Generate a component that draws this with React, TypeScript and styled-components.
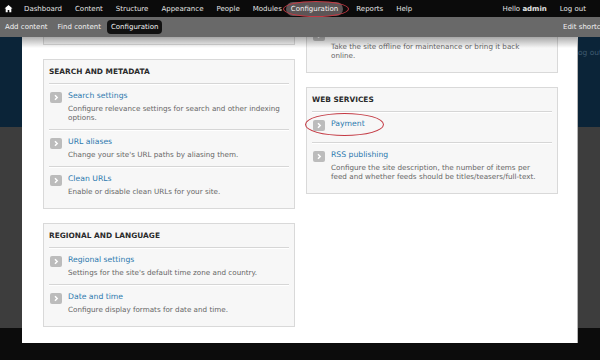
import React from 'react';
import styled, { createGlobalStyle } from 'styled-components';

const Global = createGlobalStyle`
  html, body { margin: 0; padding: 0; background: #0c0c0c; }
  body { font-family: "DejaVu Sans", Verdana, sans-serif; width: 600px; height: 360px; overflow: hidden; }
`;

const Page = styled.div`
  display: flex;
  flex-direction: column;
  width: 600px;
  height: 360px;
`;

const Toolbar = styled.div`
  height: 17px;
  flex-shrink: 0;
  background: #0b0b0b;
  display: flex;
  align-items: center;
  padding: 0 9px 0 0;
  font-size: 7px;
  color: #e4e4e4;
`;

const NavGroup = styled.div`
  display: flex;
  align-items: center;
  gap: 3px;
`;

const NavItem = styled.span<{ $active?: boolean }>`
  position: relative;
  padding: 0 5px;
  margin: ${(p) => (p.$active ? '0 5px 0 -4px' : '0')};
  line-height: 14px;
  white-space: nowrap;
  border-radius: 7px;
  background: ${(p) => (p.$active ? '#5c5556' : 'transparent')};
  color: ${(p) => (p.$active ? '#f4f0f0' : '#e4e4e4')};
  ${(p) =>
    p.$active &&
    `&::after {
      content: '';
      position: absolute;
      left: -3px; right: -6px; top: -1px; bottom: -1px;
      border: 1.5px solid #c43a44;
      border-radius: 50%;
    }`}
`;

const HomeLink = styled.span`
  display: flex;
  align-items: center;
  padding: 0 6px 0 4px;
`;

const Spacer = styled.div`
  flex: 1;
`;

const Shortcuts = styled.div`
  height: 20px;
  flex-shrink: 0;
  background: #696969;
  display: flex;
  align-items: center;
  padding-left: 1px;
  font-size: 7px;
  color: #f2f2f2;
  gap: 2px;
  overflow: hidden;
`;

const ShortcutItem = styled.span<{ $active?: boolean }>`
  padding: 0 4px;
  line-height: 14px;
  white-space: nowrap;
  border-radius: 4px;
  background: ${(p) => (p.$active ? '#111' : 'transparent')};
`;

const EditShortcuts = styled.span`
  margin-left: auto;
  width: 37px;
  flex-shrink: 0;
  overflow: hidden;
  white-space: nowrap;
`;

const Body = styled.div`
  position: relative;
  flex: 1;
  overflow: hidden;
`;

const Backdrop = styled.div`
  display: grid;
  grid-template-rows: 90px 201px 1fr;
  height: 100%;
`;

const Band = styled.div<{ $tone: string }>`
  background: ${(p) => p.$tone};
  display: flex;
  justify-content: flex-end;
  align-items: flex-start;
  overflow: hidden;
`;

const GhostText = styled.span`
  margin: 11px -2px 0 0;
  font-size: 7.5px;
  color: #3f5b70;
  white-space: nowrap;
`;

const Panel = styled.div`
  position: absolute;
  top: 0;
  left: 22px;
  width: 556px;
  height: 306px;
  background: #fff;
  border-right: 1px solid #b5b5b5;
  box-sizing: border-box;
  overflow: hidden;
  &::before {
    content: '';
    position: absolute;
    top: 0; left: 0; right: 0;
    height: 11px;
    background: linear-gradient(rgba(0, 0, 0, 0.32), rgba(0, 0, 0, 0));
    z-index: 2;
    pointer-events: none;
  }
`;

const Columns = styled.div`
  display: grid;
  grid-template-columns: 252px 252px;
  column-gap: 11px;
  padding-left: 21px;
  align-items: start;
`;

const Column = styled.div`
  display: flex;
  flex-direction: column;
  gap: 14px;
`;

const Clip = styled.div<{ $h: number }>`
  height: ${(p) => p.$h}px;
  overflow: hidden;
  display: flex;
  flex-direction: column;
  justify-content: flex-end;
`;

const Box = styled.div`
  background: #f7f7f7;
  border: 1px solid #d9d9d9;
  padding: 0 5px 5px;
  flex-shrink: 0;
`;

const BoxTitle = styled.h3`
  margin: 0;
  padding: 7px 0 6px;
  font-size: 7.4px;
  line-height: 10px;
  font-weight: bold;
  color: #2b2b2b;
  border-bottom: 1px solid #d6d6d6;
  box-shadow: 0 1px 0 #fff;
`;

const Item = styled.div<{ $last?: boolean; $noDesc?: boolean; $circled?: boolean }>`
  position: relative;
  display: grid;
  grid-template-columns: 12px 1fr;
  column-gap: 6px;
  padding: 7px 0 ${(p) => (p.$noDesc ? 11 : 7)}px 1px;
  border-bottom: ${(p) => (p.$last ? 'none' : '1px solid #d6d6d6')};
  box-shadow: ${(p) => (p.$last ? 'none' : '0 1px 0 #fff')};
  ${(p) =>
    p.$circled &&
    `&::after {
      content: '';
      position: absolute;
      left: -7px; top: 1px;
      width: 77px; height: 21px;
      border: 1.5px solid #c43a44;
      border-radius: 50%;
    }`}
`;

const IconBox = styled.span`
  grid-row: 1 / span 2;
  margin-top: 1px;
  width: 12px;
  height: 11px;
  border-radius: 2px;
  background: #bcbcbc;
  display: flex;
  align-items: center;
  justify-content: center;
`;

const ItemLink = styled.a`
  font-size: 7.7px;
  line-height: 10px;
  color: #2c79ae;
  text-decoration: none;
`;

const ItemDesc = styled.div<{ $narrow?: boolean }>`
  grid-column: 2;
  margin-top: 3px;
  padding-right: 4px;
  max-width: ${(p) => (p.$narrow ? '200px' : 'none')};
  font-size: 7.2px;
  line-height: 9px;
  color: #666;
`;

type Entry = { title: string; desc?: string; circled?: boolean; narrow?: boolean };

const Chevron = () => (
  <svg width="12" height="11" viewBox="0 0 12 11">
    <polyline points="5,3.2 7.2,5.5 5,7.8" fill="none" stroke="#fff" strokeWidth="1.5" />
  </svg>
);

const HomeIcon = () => (
  <svg width="9" height="9" viewBox="0 0 9 9">
    <path d="M0.5 4.6 L4.5 1 L8.5 4.6 L7.3 4.6 L7.3 8.2 L5.3 8.2 L5.3 6 L3.7 6 L3.7 8.2 L1.7 8.2 L1.7 4.6 Z" fill="#fff" />
  </svg>
);

const Section = ({ title, items }: { title?: string; items: Entry[] }) => (
  <Box>
    {title && <BoxTitle>{title}</BoxTitle>}
    {items.map((it, i) => (
      <Item key={it.title} $last={i === items.length - 1} $noDesc={!it.desc} $circled={it.circled}>
        <IconBox>
          <Chevron />
        </IconBox>
        <ItemLink href="#">{it.title}</ItemLink>
        {it.desc && <ItemDesc $narrow={it.narrow}>{it.desc}</ItemDesc>}
      </Item>
    ))}
  </Box>
);

const topNav = ['Dashboard', 'Content', 'Structure', 'Appearance', 'People', 'Modules', 'Configuration', 'Reports', 'Help'];

export default function App() {
  return (
    <Page>
      <Global />
      <Toolbar>
        <HomeLink>
          <HomeIcon />
        </HomeLink>
        <NavGroup>
          {topNav.map((n) => (
            <NavItem key={n} $active={n === 'Configuration'}>
              {n}
            </NavItem>
          ))}
        </NavGroup>
        <Spacer />
        <NavGroup>
          <NavItem>
            Hello <b>admin</b>
          </NavItem>
          <NavItem>Log out</NavItem>
        </NavGroup>
      </Toolbar>
      <Shortcuts>
        <ShortcutItem>Add content</ShortcutItem>
        <ShortcutItem>Find content</ShortcutItem>
        <ShortcutItem $active>Configuration</ShortcutItem>
        <EditShortcuts>Edit shortcuts</EditShortcuts>
      </Shortcuts>
      <Body>
        <Backdrop>
          <Band $tone="#0b2438">
            <GhostText>Log out</GhostText>
          </Band>
          <Band $tone="#3d3d3d" />
          <Band $tone="#0c0c0c" />
        </Backdrop>
        <Panel>
          <Columns>
            <Column>
              <Clip $h={8}>
                <Section items={[{ title: 'Account settings', desc: 'Configure default behavior of users.' }]} />
              </Clip>
              <Section
                title="SEARCH AND METADATA"
                items={[
                  { title: 'Search settings', desc: 'Configure relevance settings for search and other indexing options.' },
                  { title: 'URL aliases', desc: "Change your site's URL paths by aliasing them." },
                  { title: 'Clean URLs', desc: 'Enable or disable clean URLs for your site.' },
                ]}
              />
              <Section
                title="REGIONAL AND LANGUAGE"
                items={[
                  { title: 'Regional settings', desc: "Settings for the site's default time zone and country." },
                  { title: 'Date and time', desc: 'Configure display formats for date and time.' },
                ]}
              />
            </Column>
            <Column>
              <Clip $h={36}>
                <Section
                  items={[
                    {
                      title: 'Maintenance mode',
                      desc: 'Take the site offline for maintenance or bring it back online.',
                      narrow: true,
                    },
                  ]}
                />
              </Clip>
              <Section
                title="WEB SERVICES"
                items={[
                  { title: 'Payment', circled: true },
                  {
                    title: 'RSS publishing',
                    desc: 'Configure the site description, the number of items per feed and whether feeds should be titles/teasers/full-text.',
                  },
                ]}
              />
            </Column>
          </Columns>
        </Panel>
      </Body>
    </Page>
  );
}
